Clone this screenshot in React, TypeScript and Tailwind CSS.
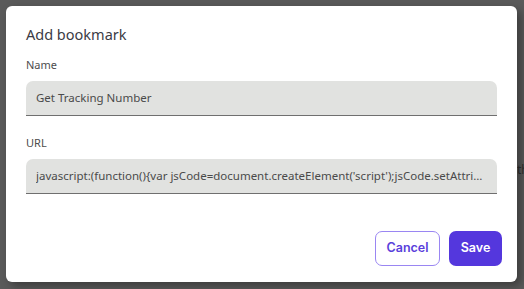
import React from 'react';

const bodyFont = { fontFamily: '"Noto Sans", "Open Sans", sans-serif' };
const btnFont = { fontFamily: 'Inter, "Liberation Sans", sans-serif' };

interface FieldProps {
  label: string;
  value: string;
}

const Field: React.FC<FieldProps> = ({ label, value }) => (
  <div className="flex flex-col">
    <label className="text-[11px] leading-[16px] text-[#4d4d4d] mb-[8px]">{label}</label>
    <div className="h-[35px] bg-[#e1e2e0] rounded-t-[7px] border-b border-[#6f6f6f] flex items-center px-[10px]">
      <span className="text-[11.5px] text-[#4a4a4a] truncate whitespace-nowrap">{value}</span>
    </div>
  </div>
);

export default function App() {
  return (
    <div className="relative w-[524px] h-[289px] overflow-hidden bg-[#5a5a5a]" style={bodyFont}>
      <span className="absolute left-[517px] top-[161px] text-[12px] text-[#2e2e2e]">th</span>
      <div className="relative ml-[6px] mt-[6px] w-[511px] h-[276px] bg-white rounded-[6px] shadow-[4px_4px_10px_rgba(0,0,0,0.35)] flex flex-col">
        <div className="px-[20px] pt-[17px]">
          <h2 className="text-[14.5px] leading-[22px] text-[#3b3b45]">Add bookmark</h2>
          <div className="mt-[12px] flex flex-col gap-[19px]">
            <Field label="Name" value="Get Tracking Number" />
            <Field
              label="URL"
              value="javascript:(function(){var jsCode=document.createElement('script');jsCode.setAttribute('src','https://example.com/tracking.js');document.body.appendChild(jsCode);}())"
            />
          </div>
        </div>
        <div className="mt-auto mb-[16px] pr-[15px] flex justify-end gap-[9px]" style={btnFont}>
          <button className="w-[65px] h-[35px] rounded-[7px] border border-[#9a86f2] bg-white text-[#5a3fdb] text-[12.5px] font-semibold">
            Cancel
          </button>
          <button className="w-[53px] h-[35px] rounded-[7px] bg-[#5437dd] text-white text-[12.5px] font-semibold">
            Save
          </button>
        </div>
      </div>
    </div>
  );
}
